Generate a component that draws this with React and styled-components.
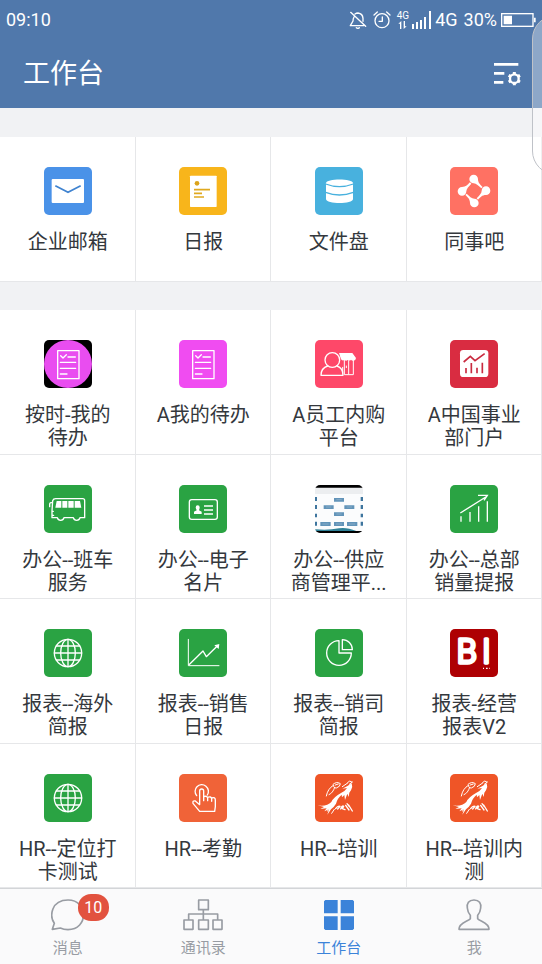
import React from "react";
import styled, { createGlobalStyle } from "styled-components";

const GlobalStyle = createGlobalStyle`
  *, *::before, *::after { box-sizing: border-box; }
  body {
    margin: 0;
    background: #f1f2f4;
    color: #34383d;
    font-family: Roboto, "Noto Sans CJK SC", sans-serif;
  }
`;

const Page = styled.div`
  display: flex;
  flex-direction: column;
  min-height: 100vh;
  overflow-x: clip;
`;

const Header = styled.header`
  background: #5078ab;
  color: #fff;
`;

const StatusBar = styled.div`
  display: flex;
  align-items: center;
  justify-content: space-between;
  height: 40px;
  padding: 0 6px;
  font-size: 18px;
  line-height: 20px;
`;

const StatusGroup = styled.div`
  display: flex;
  align-items: center;
  gap: ${(p) => p.$gap}px;
`;

const DataBadge = styled.span`
  display: flex;
  flex-direction: column;
  align-items: center;
  font-size: 10px;
  line-height: 10px;
`;

const TitleBar = styled.div`
  display: flex;
  align-items: center;
  justify-content: space-between;
  height: 68px;
  padding: 0 20px 0 23px;
`;

const Title = styled.h1`
  margin: 0;
  font-size: 27px;
  font-weight: 400;
  line-height: 40px;
`;

const IconButton = styled.button`
  display: flex;
  padding: 0;
  border: 0;
  background: none;
  color: inherit;
  cursor: pointer;
`;

const Main = styled.main`
  display: flex;
  flex: 1;
  flex-direction: column;
  gap: 28px;
  padding-top: 29px;
`;

const AppGrid = styled.section`
  display: grid;
  flex: ${(p) => (p.$fill ? 1 : "none")};
  grid-template-columns: repeat(4, 1fr);
  grid-auto-rows: ${(p) => (p.$fill ? "minmax(144px, 1fr)" : "145px")};
  background: #fff;
`;

const AppCell = styled.a`
  display: flex;
  flex-direction: column;
  align-items: center;
  gap: 16px;
  padding: 30px 16px 0;
  box-shadow: inset -1px -1px 0 #e6e7e9;
  color: inherit;
  text-decoration: none;
`;

const AppIcon = styled.svg`
  flex: none;
  width: 48px;
  height: 48px;
  border-radius: 5px;
  background: ${(p) => p.$bg};
`;

const AppName = styled.span`
  max-width: 100%;
  font-size: 20px;
  line-height: 23px;
  text-align: center;
  word-break: break-all;
`;

const TabBar = styled.nav`
  display: grid;
  grid-template-columns: repeat(4, 1fr);
  height: 76px;
  border-top: 1px solid #d3d5d8;
  background: #fafafb;
`;

const Tab = styled.button`
  display: flex;
  flex-direction: column;
  align-items: center;
  gap: 7px;
  padding: 10px 0 0;
  border: 0;
  background: none;
  color: ${(p) => (p.$active ? "#3b83d9" : "#989ca3")};
  font: inherit;
  font-size: 15px;
  line-height: 20px;
  cursor: pointer;
`;

const TabIcon = styled.span`
  position: relative;
  display: flex;
  align-items: center;
  height: 32px;
`;

const Badge = styled.span`
  position: absolute;
  top: -5px;
  left: 27px;
  width: 31px;
  border-radius: 13px;
  background: #e2523f;
  color: #fff;
  font-size: 16px;
  line-height: 27px;
  text-align: center;
`;

const EdgeHandle = styled.div`
  position: absolute;
  top: 15px;
  right: 0;
  width: 10px;
  height: 160px;
  overflow: hidden;
  pointer-events: none;

  &::before {
    content: "";
    display: block;
    width: 60px;
    height: 160px;
    border: 1px solid #bfc2c8;
    border-radius: 24px;
    background: rgba(255, 255, 255, 0.35);
  }
`;

const line = {
  fill: "none",
  stroke: "#fff",
  strokeWidth: 4,
  strokeLinecap: "round",
  strokeLinejoin: "round",
};

const Checklist = () => (
  <g {...line}>
    <rect x="41" y="32" width="64" height="84" />
    <path d="M50 47l7 7 10-10M72 51h22M49 67h46M49 85h46M49 102h20" />
  </g>
);

const Globe = () => (
  <g {...line}>
    <circle cx="72" cy="72" r="41" />
    <ellipse cx="72" cy="72" rx="22" ry="41" />
    <path d="M72 31v82M31 72h82M37 51h70M37 93h70" />
  </g>
);

const Dragon = () => (
  <g>
    <path
      fill="#fff"
      d="M8 94Q36 98 49 84Q55 70 78 57Q90 52 96 42L82 44Q98 37 110 28Q114 38 108 49L103 56L101 69L97 59L90 78L88 63L81 70L80 62Q67 73 63 89Q57 99 48 106L37 122L42 106L28 112L35 103L16 105L27 99Z"
    />
    <path
      {...line}
      strokeWidth="3"
      d="M34 66Q38 44 55 34M42 62Q54 57 59 40M54 31Q66 21 76 29Q76 38 64 42Q54 42 56 34M61 33l9-3M82 38L98 27M98 25q6-8 13-1M103 31l9-7M58 91L37 111M58 106l-8 12"
    />
    <path
      {...line}
      d="M62 104q7-10 13-7l-7 8M77 105q5-12 9-8l-4 7 8 3M96 89l7 9M92 94l10 14M101 93l11 18"
    />
  </g>
);

const Mail = () => (
  <g>
    <rect x="23" y="36" width="97" height="72" rx="3" fill="#fff" />
    <path d="M34 56l38 20 38-20" fill="none" stroke="#3f83d0" strokeWidth="5" />
  </g>
);

const Daily = () => (
  <g>
    <rect x="33" y="26" width="80" height="94" rx="2" fill="#fff" />
    <circle cx="54" cy="49" r="7" fill="#dba31b" />
    <path d="M45 68h48M45 79h24M45 90h30" stroke="#e0a920" strokeWidth="5" />
  </g>
);

const Disk = () => (
  <g>
    <path fill="#fff" d="M33 49C33 34 114 34 114 49V96C114 112 33 112 33 96Z" />
    <path d="M32 51Q73 67 115 51M32 76Q73 92 115 76" fill="none" stroke="#48b1de" strokeWidth="4" />
  </g>
);

const Colleagues = () => (
  <g fill="#fff">
    {[0, 90, 180, 270].map((angle) => (
      <path
        key={angle}
        transform={`rotate(${angle} 72 72)`}
        d="M58 36A13 13 0 0 1 84 36C84 48 91 53 98 60L94 64C86 57 79 49 71 49A13 13 0 0 1 58 36Z"
      />
    ))}
  </g>
);

const TodoRound = () => (
  <g>
    <circle cx="72" cy="72" r="72" fill="#e94df0" />
    <Checklist />
  </g>
);

const Shop = () => (
  <g>
    <path {...line} strokeWidth="3" d="M88 58v46h27V58M94 78v5M101 62v40M83 82v14" />
    <path
      fill="#fff"
      d="M72 39H112L123 54Q122 63 114 62Q110 62 108 59Q104 64 98 60Q94 64 88 60Q82 63 78 58Z"
    />
    <circle {...line} cx="52" cy="60" r="22" fill="#fe4869" />
    <path {...line} d="M38 78C25 82 18 92 18 106H84C84 92 78 82 66 78" />
  </g>
);

const Portal = () => (
  <g>
    <rect x="30" y="30" width="85" height="81" rx="10" fill="#fff" />
    <path d="M41 66l20-17 14 13 29-21" fill="none" stroke="#c92b40" strokeWidth="5" />
    <path d="M48 84v16M64 69v31M81 83v17M97 68v32" stroke="#c92b40" strokeWidth="5" />
  </g>
);

const Bus = () => (
  <g>
    <path
      {...line}
      d="M26 47Q28 41 35 41H116Q122 41 122 47V98H108Q106 106 98 106Q90 106 88 98H60Q58 106 50 106Q42 106 40 98H24V78ZM24 52Q17 52 17 58V65M24 79h4M24 91h5"
    />
    <path fill="#fff" d="M38 48H52V68H34ZM55 48H70V68H55ZM73 48H89V68H73ZM92 48H108L112 68H92Z" />
  </g>
);

const NameCard = () => (
  <g>
    <rect {...line} x="31" y="44" width="84" height="59" rx="7" />
    <path fill="#fff" d="M50 68Q50 61 56 61Q63 61 62 69L60 76L68 80V87H45V80L53 76Z" />
    <path d="M75 63h27M75 75h27M75 87h27" stroke="#fff" strokeWidth="4" />
  </g>
);

const Supplier = () => (
  <g>
    <rect width="144" height="144" fill="#fbfcfd" />
    <rect y="7" width="144" height="20" fill="#eceef0" />
    <path fill="#000" d="M0 0H144V8H0ZM0 138H144V144H0Z" />
    <path fill="#2f8197" d="M0 133Q40 137 72 130Q94 126 124 138H0Z" />
    <path
      fill="#6294b9"
      d="M57 39h30v11H57zM26 61h30v11H26zM88 61h30v11H88zM57 82h30v11H57zM16 111h31v12H16zM57 111h30v12H57zM96 111h31v12H96z"
    />
    <path
      fill="#3e759e"
      d="M0 36h6v12H0zM0 60h6v12H0zM0 86h6v11H0zM0 110h6v12H0zM137 36h7v12h-7zM137 60h7v12h-7zM137 86h7v11h-7zM137 110h7v12h-7z"
    />
    <path d="M64 44h16M33 66h16M95 66h16M64 87h16M22 117h19M63 117h18M102 117h19" stroke="#86abc6" strokeWidth="3" />
  </g>
);

const Growth = () => (
  <g {...line} strokeLinecap="butt" strokeLinejoin="miter">
    <path d="M31 84L112 33M84 31H112L102 46" />
    <path d="M33 94v16M60 81v29M86 64v46M112 49v61" />
  </g>
);

const Trend = () => (
  <g>
    <path {...line} strokeWidth="3" d="M28 31V110H120" />
    <path {...line} d="M30 107L72 66L82 83L114 52" />
    <path fill="#fff" d="M106 49L121 45L119 60Z" />
  </g>
);

const Pie = () => (
  <g {...line}>
    <path d="M72 35A37 37 0 1 0 109 72H72Z" />
    <path d="M82 32A30 30 0 0 1 112 62H82Z" />
  </g>
);

const BiMark = () => (
  <g fill="#fff">
    <g
      fontFamily="Roboto, sans-serif"
      fontSize="98"
      fontWeight="300"
      stroke="#fff"
      strokeWidth="10"
      strokeLinejoin="round"
    >
      <text x="20" y="101">B</text>
      <text x="96" y="101">I</text>
    </g>
    <path d="M76 118h3M84 118h3M92 117h3M99 116h3v4h-3zM108 116h5v4h-5zM117 116h2v4h-2z" />
  </g>
);

const Tap = () => (
  <g {...line}>
    <path d="M53 65A20 20 0 1 1 85 63" />
    <path d="M62 90V51Q62 45 68 45Q74 45 74 51V80M74 68Q84 64 86 72V80M86 70Q96 66 98 74V82M98 72Q109 68 109 78V98L107 112H62L42 88Q40 79 49 81L62 92" />
  </g>
);

const quickApps = [
  { name: "企业邮箱", bg: "#4a92e8", Art: Mail },
  { name: "日报", bg: "#f8b51b", Art: Daily },
  { name: "文件盘", bg: "#48b1de", Art: Disk },
  { name: "同事吧", bg: "#ff7163", Art: Colleagues },
];

const green = "#2aa343";

const companyApps = [
  { name: "按时-我的待办", bg: "#000", Art: TodoRound },
  { name: "A我的待办", bg: "#f04cf1", Art: Checklist },
  { name: "A员工内购平台", bg: "#fe4869", Art: Shop },
  { name: "A中国事业部门户", bg: "#d92c41", Art: Portal },
  { name: "办公--班车服务", bg: green, Art: Bus },
  { name: "办公--电子名片", bg: green, Art: NameCard },
  { name: "办公--供应商管理平...", bg: "#fff", Art: Supplier },
  { name: "办公--总部销量提报", bg: green, Art: Growth },
  { name: "报表--海外简报", bg: green, Art: Globe },
  { name: "报表--销售日报", bg: green, Art: Trend },
  { name: "报表--销司简报", bg: green, Art: Pie },
  { name: "报表-经营报表V2", bg: "#ae0003", Art: BiMark },
  { name: "HR--定位打卡测试", bg: green, Art: Globe },
  { name: "HR--考勤", bg: "#f06338", Art: Tap },
  { name: "HR--培训", bg: "#ef5527", Art: Dragon },
  { name: "HR--培训内测", bg: "#ef5527", Art: Dragon },
];

const tabLine = { fill: "none", stroke: "currentColor", strokeWidth: 5, strokeLinejoin: "round" };

const tabs = [
  {
    label: "消息",
    badge: 10,
    icon: (
      <svg width="34" height="32" viewBox="0 0 102 96" {...tabLine}>
        <path d="M4 91L10 73C-5 52 0 3 51 3C113 3 113 92 51 92C41 92 34 90 28 87Z" />
      </svg>
    ),
  },
  {
    label: "通讯录",
    icon: (
      <svg width="40" height="32" viewBox="0 0 120 96" {...tabLine}>
        <path d="M47 3h29v29H47zM3 63h27v28H3zM47 63h29v28H47zM90 63h27v28H90zM61 32v31M17 63V45h87v18" />
      </svg>
    ),
  },
  {
    label: "工作台",
    active: true,
    icon: (
      <svg width="30" height="30" viewBox="0 0 90 90" fill="currentColor">
        <path d="M4 0H41V40H0V4ZM50 0H86L90 4V40H50ZM0 49H41V90H4L0 86ZM50 49H90V86L86 90H50Z" />
      </svg>
    ),
  },
  {
    label: "我",
    icon: (
      <svg width="32" height="32" viewBox="0 0 96 96" {...tabLine}>
        <path d="M48 3C32 3 26 13 28 27C29 38 32 44 37 49V59C30 68 3 70 3 91H93C93 70 66 68 59 59V49C64 44 67 38 68 27C70 13 64 3 48 3Z" />
      </svg>
    ),
  },
];

function Apps({ items, fill, label }) {
  return (
    <AppGrid $fill={fill} aria-label={label}>
      {items.map(({ name, bg, Art }) => (
        <AppCell key={name} href="#app">
          <AppIcon $bg={bg} viewBox="0 0 144 144" aria-hidden="true">
            <Art />
          </AppIcon>
          <AppName>{name}</AppName>
        </AppCell>
      ))}
    </AppGrid>
  );
}

function StatusIcons() {
  const stroke = { fill: "none", stroke: "#fff", strokeWidth: 4, strokeLinecap: "round", strokeLinejoin: "round" };
  return (
    <StatusGroup $gap={6}>
      <StatusGroup $gap={6}>
        <svg width="18" height="18" viewBox="0 0 54 54" {...stroke}>
          <path d="M5 4L50 46M15 18Q12 23 12 30L4 44H44M18 9Q22 6 27 6Q41 8 42 22V31M22 50Q27 54 31 50" />
        </svg>
        <svg width="18" height="18" viewBox="0 0 54 54" {...stroke}>
          <circle cx="27" cy="29" r="21" />
          <path d="M28 18V31H18M3 12L13 3M41 3L51 12" />
        </svg>
      </StatusGroup>
      <StatusGroup $gap={3}>
        <DataBadge>
          4G
          <svg width="9" height="8" viewBox="0 0 27 24" fill="#fff">
            <path d="M10 0V24H6V8H1ZM17 0V24L26 16H21V0Z" />
          </svg>
        </DataBadge>
        <svg width="20" height="18" viewBox="0 0 60 54" fill="#fff">
          <path d="M0 39h6v15H0zM12 33h6v21h-6zM24 27h6v27h-6zM36 18h6v36h-6zM51 0h6v54h-6z" />
        </svg>
        <span>4G</span>
      </StatusGroup>
      <StatusGroup $gap={4}>
        <span>30%</span>
        <svg width="35" height="14" viewBox="0 0 105 42">
          <rect x="2" y="2" width="94" height="38" fill="none" stroke="#fff" strokeWidth="4" />
          <path fill="#fff" d="M8 8h25v26H8zM99 14h5v14h-5z" />
        </svg>
      </StatusGroup>
    </StatusGroup>
  );
}

export default function App() {
  return (
    <Page>
      <GlobalStyle />
      <Header>
        <StatusBar>
          <time>09:10</time>
          <StatusIcons />
        </StatusBar>
        <TitleBar>
          <Title>工作台</Title>
          <IconButton type="button" aria-label="设置">
            <svg width="28" height="24" viewBox="0 0 84 72">
              <path fill="#fff" d="M0 3h73v8H0zM0 30h31v8H0zM0 57h28v8H0z" />
              <circle cx="61" cy="50" r="13" fill="none" stroke="#fff" strokeWidth="7" />
              <path
                d="M61 38V30M61 62V70M71 44L78 40M51 56L44 60M71 56L78 60M51 44L44 40"
                stroke="#fff"
                strokeWidth="9"
              />
            </svg>
          </IconButton>
        </TitleBar>
      </Header>
      <Main>
        <Apps items={quickApps} label="常用" />
        <Apps items={companyApps} label="应用" fill />
      </Main>
      <TabBar>
        {tabs.map(({ label, icon, badge, active }) => (
          <Tab key={label} type="button" $active={active} aria-current={active ? "page" : undefined}>
            <TabIcon>
              {icon}
              {badge && <Badge>{badge}</Badge>}
            </TabIcon>
            {label}
          </Tab>
        ))}
      </TabBar>
      <EdgeHandle />
    </Page>
  );
}
